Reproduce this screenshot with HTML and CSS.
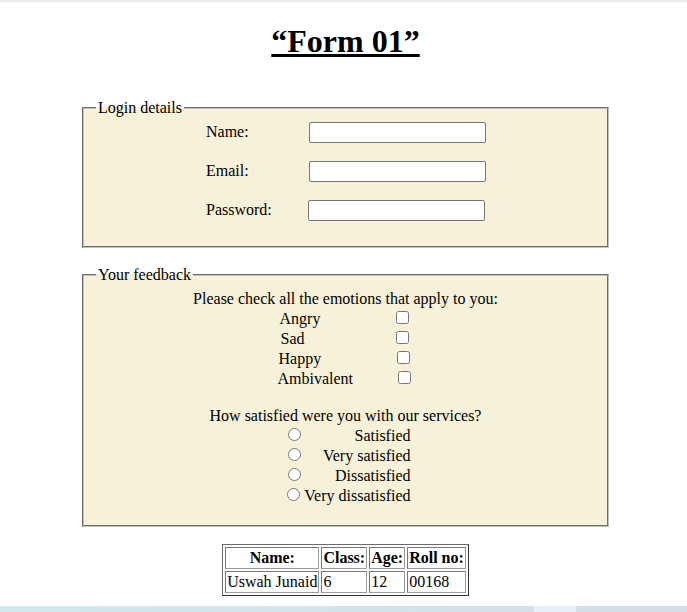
FILE: index.html
```html
<!DOCTYPE html>
<html lang="en">
<head>
<meta charset="utf-8">
<title>Form 01</title>
<link rel="stylesheet" href="styles.css">
</head>
<body>
<h1 class="title">“Form 01”</h1>

<form class="form">
  <fieldset class="panel panel-login">
    <legend class="panel-legend">Login details</legend>
    <div class="login-grid">
      <label class="login-label" for="name">Name:</label>
      <input class="login-input" type="text" id="name">
      <label class="login-label" for="email">Email:</label>
      <input class="login-input" type="text" id="email">
      <label class="login-label" for="password">Password:</label>
      <input class="login-input login-input-shift" type="password" id="password">
    </div>
  </fieldset>

  <fieldset class="panel panel-feedback">
    <legend class="panel-legend">Your feedback</legend>
    <p class="question">Please check all the emotions that apply to you:</p>
    <div class="choices choices-check">
      <label class="choice"><span class="check-text t-angry">Angry</span><input type="checkbox"></label>
      <label class="choice"><span class="check-text t-sad">Sad</span><input type="checkbox"></label>
      <label class="choice"><span class="check-text t-happy">Happy</span><input type="checkbox"></label>
      <label class="choice"><span class="check-text t-amb">Ambivalent</span><input type="checkbox"></label>
    </div>
    <p class="question question-gap">How satisfied were you with our services?</p>
    <div class="choices choices-radio">
      <label class="choice"><input type="radio" name="sat"><span class="radio-text">Satisfied</span></label>
      <label class="choice"><input type="radio" name="sat"><span class="radio-text">Very satisfied</span></label>
      <label class="choice"><input type="radio" name="sat"><span class="radio-text">Dissatisfied</span></label>
      <label class="choice choice-last"><input type="radio" name="sat"><span class="radio-text">Very dissatisfied</span></label>
    </div>
  </fieldset>
</form>

<table class="info-table">
  <tr>
    <th>Name:</th>
    <th>Class:</th>
    <th>Age:</th>
    <th>Roll no:</th>
  </tr>
  <tr>
    <td>Uswah Junaid</td>
    <td>6</td>
    <td>12</td>
    <td>00168</td>
  </tr>
</table>

<div class="bottom-bar"><span class="bottom-bar-light"></span></div>
</body>
</html>
```

FILE: styles.css
```css
html {
  border-top: 2px solid #ebebeb;
  background: #ffffff;
}

body {
  margin: 0 6px 0 10px;
  font-family: "Liberation Serif", "Times New Roman", serif;
  font-size: 16px;
  color: #000000;
}

.title {
  margin: 21px 0 39px;
  font-size: 32px;
  font-weight: bold;
  text-align: center;
  text-decoration: underline;
}

.form {
  margin: 0;
}

.panel {
  box-sizing: border-box;
  width: 527px;
  margin: 0 auto;
  padding: 4.6px 12px 25px;
  border: 2px groove #c0c0c0;
  background: #f8f1da;
}

.panel-legend {
  padding: 0 2px;
}

.panel-feedback {
  margin-top: 18px;
  padding-top: 6.6px;
  padding-bottom: 20px;
}

.login-grid {
  display: grid;
  grid-template-columns: 103px 177px;
  row-gap: 18px;
  align-items: center;
  margin-left: 110px;
}

.login-input {
  box-sizing: border-box;
  width: 177px;
  height: 21px;
  margin: 0;
  border: 1px solid #767676;
  border-radius: 2px;
  background: #ffffff;
}

.login-input-shift {
  margin-left: -1px;
}

.question {
  margin: 0;
  text-align: center;
}

.question-gap {
  margin-top: 19px;
}

.choices {
  margin: 0 auto;
}

.choice {
  display: block;
  white-space: nowrap;
}

.choices-check {
  width: 136px;
}

.check-text {
  display: inline-block;
  width: 114px;
}

.t-angry { padding-left: 2px; width: 112px; }
.t-sad { padding-left: 3px; width: 111px; }
.t-happy { padding-left: 1px; width: 114px; }
.t-amb { padding-left: 0; width: 116px; }

.choices-radio {
  width: 130px;
}

.choices-radio input {
  margin-left: 7px;
}

.radio-text {
  display: inline-block;
  width: 107px;
  text-align: right;
}

.choice-last input {
  margin-left: 6px;
}

.choice-last .radio-text {
  width: 108px;
}

.info-table {
  margin: 17px auto 0;
  border: 1px solid;
  border-color: #6a6a6a #333333 #333333 #6a6a6a;
  border-spacing: 2px;
}

.info-table th,
.info-table td {
  padding: 1px;
  border: 1px solid;
  border-color: #777777 #9a9a9a #9a9a9a #777777;
}

.info-table th {
  font-weight: bold;
  text-align: center;
}

.info-table td {
  text-align: left;
}

.bottom-bar {
  position: fixed;
  left: 0;
  right: 0;
  bottom: 0;
  height: 6px;
  background: linear-gradient(to right, #d2e7ee, #d4e2ea 60%, #d5dde8);
}

.bottom-bar-light {
  position: absolute;
  top: 0;
  bottom: 0;
  left: 534px;
  width: 42px;
  background: #e8eef8;
}
```
